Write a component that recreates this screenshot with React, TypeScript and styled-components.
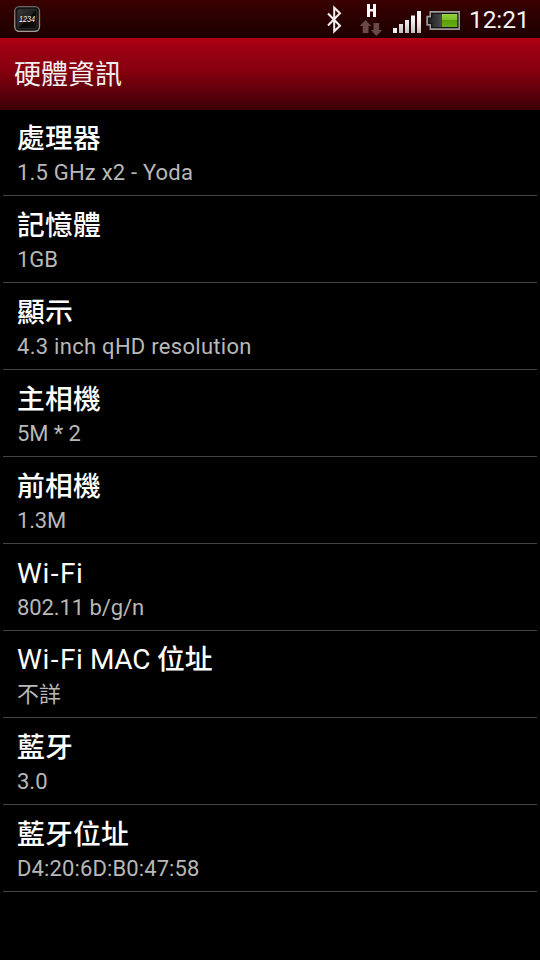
import React from "react";
import styled, { createGlobalStyle } from "styled-components";

const GlobalStyle = createGlobalStyle`
  * { box-sizing: border-box; }
  body { margin: 0; background: #000; }
`;

const Screen = styled.div`
  width: 540px;
  height: 960px;
  overflow: hidden;
  display: flex;
  flex-direction: column;
  background: #000;
  color: #fff;
  font-family: Roboto, "Noto Sans CJK TC", sans-serif;
`;

const StatusBar = styled.div`
  flex: none;
  height: 38px;
  display: flex;
  align-items: flex-start;
  justify-content: space-between;
  padding: 0 10px 0 14px;
  background: linear-gradient(#390000, #1c0000);
`;

const StatusIcons = styled.div`
  display: flex;
  align-items: flex-start;
`;

const Clock = styled.time`
  width: 61px;
  margin-left: 8px;
  font-size: 24.5px;
  line-height: 40px;
  letter-spacing: -0.1px;
  white-space: nowrap;
  color: #f4f4f4;
`;

const Header = styled.header`
  flex: none;
  height: 72px;
  padding-left: 14px;
  background: linear-gradient(#b40014 0%, #9c0012 14%, #86000f 45%, #66000b 68%, #3c0006 100%);
`;

const Title = styled.h1`
  margin: 0;
  font-size: 27px;
  font-weight: 400;
  line-height: 74px;
  color: #f3f0f0;
`;

const List = styled.ul`
  flex: none;
  margin: -1px 3px 0;
  padding: 0;
  list-style: none;
`;

const Row = styled.li`
  height: 87px;
  padding: 9px 14px 0;
  border-bottom: 1px solid #444;
`;

const Label = styled.div<{ $mixed: boolean }>`
  height: 37px;
  font-size: 28px;
  line-height: ${(p) => (p.$mixed ? 40 : 42)}px;
  white-space: pre;
`;

const LabelPart = styled.span<{ $spacing?: number; $cjk?: boolean }>`
  letter-spacing: ${(p) => p.$spacing ?? 0}px;
  font-weight: ${(p) => (p.$cjk ? 500 : 400)};
  font-size: ${(p) => (p.$cjk ? 27.8 : 28)}px;
`;

const Value = styled.div<{ $spacing?: number }>`
  height: 32px;
  font-size: 22px;
  line-height: 35px;
  letter-spacing: ${(p) => p.$spacing ?? 0}px;
  white-space: nowrap;
  color: #b8b8b8;
`;

const CounterIcon = () => (
  <svg width="28" height="38" viewBox="14 0 28 38">
    <defs>
      <linearGradient id="face" x1="0" y1="0" x2="1" y2="1">
        <stop offset="0" stopColor="#3a3a3a" />
        <stop offset="0.5" stopColor="#202020" />
        <stop offset="0.51" stopColor="#080808" />
        <stop offset="1" stopColor="#111" />
      </linearGradient>
      <linearGradient id="rim" x1="0" y1="0" x2="0" y2="1">
        <stop offset="0" stopColor="#6e6662" />
        <stop offset="1" stopColor="#a39c99" />
      </linearGradient>
    </defs>
    <rect x="14.7" y="6.7" width="24.8" height="24.6" rx="4.5" fill="#161616" stroke="url(#rim)" strokeWidth="1.3" />
    <rect x="17.5" y="9.5" width="19" height="19" rx="2" fill="url(#face)" stroke="#303030" strokeWidth="0.7" />
    <Digits x="19" y="21.8" textLength="16" lengthAdjust="spacingAndGlyphs">1234</Digits>
  </svg>
);

const Digits = styled.text`
  font-family: "Liberation Sans", sans-serif;
  font-size: 8.5px;
  font-style: italic;
  fill: #f0f4f4;
`;

const BluetoothIcon = () => (
  <svg width="34" height="38" viewBox="326 0 34 38" fill="none" stroke="#f5f0f0" strokeWidth="2" strokeLinejoin="miter">
    <path d="M328 13.5 L340 25.8 L334.2 31.3 V7.7 L340 13.2 L328 25.5" />
  </svg>
);

const DataIcon = () => (
  <svg width="30" height="38" viewBox="360 0 30 38">
    <path fill="#fff" d="M367 4H370V9H373V4H376V17H373V11.5H370V17H367Z" />
    <g fill="#6a4848">
      <path d="M365.5 20L371.3 26H368.5V33H362.7V26H359.8Z" />
      <path d="M373.5 23H379.2V30H382.2L376.4 36L370.8 30H373.5Z" />
    </g>
  </svg>
);

const SIGNAL_BARS = [28, 24, 20, 15.5, 11];

const SignalIcon = () => (
  <svg width="34" height="38" viewBox="390 0 34 38">
    <defs>
      <linearGradient id="bar" x1="0" y1="10" x2="0" y2="33" gradientUnits="userSpaceOnUse">
        <stop offset="0" stopColor="#fff" />
        <stop offset="0.5" stopColor="#eee" />
        <stop offset="1" stopColor="#c4bcbc" />
      </linearGradient>
    </defs>
    {SIGNAL_BARS.map((y, i) => (
      <rect key={y} x={393 + i * 6} y={y} width="4" height={33 - y} fill={i === 0 ? "#f2f2f2" : "url(#bar)"} />
    ))}
  </svg>
);

const BatteryIcon = () => (
  <svg width="37" height="38" viewBox="424 0 37 38">
    <defs>
      <linearGradient id="empty" x1="0" y1="0" x2="1" y2="0">
        <stop offset="0" stopColor="#222" />
        <stop offset="1" stopColor="#4a4a4a" />
      </linearGradient>
      <linearGradient id="charge" x1="0" y1="0" x2="0" y2="1">
        <stop offset="0" stopColor="#96d13c" />
        <stop offset="0.48" stopColor="#7cbd25" />
        <stop offset="0.5" stopColor="#56a00c" />
        <stop offset="1" stopColor="#68ad12" />
      </linearGradient>
    </defs>
    <path fill="#9b9b9b" d="M429.5 11H460V30H429.5V25.7H426.3V15.8H429.5Z" />
    <path fill="#151515" d="M431 12.7H458.5V28.3H431V24H428V17.5H431Z" />
    <path fill="url(#empty)" d="M432.3 14H442V27H432.3V22.8H429.3V18.8H432.3Z" />
    <rect x="442" y="14" width="15.3" height="13" fill="url(#charge)" />
  </svg>
);

type Part = { text: string; spacing?: number; cjk?: boolean };
type Item = { label: Part[]; value: string; valueSpacing?: number };

const cjk = (text: string): Part => ({ text, cjk: true, spacing: 0.2 });
const WIFI: Part[] = [
  { text: "W", spacing: 0.6 },
  { text: "i", spacing: 1.5 },
  { text: "-", spacing: 1.6 },
  { text: "Fi", spacing: 0.4 },
];

const ITEMS: Item[] = [
  { label: [cjk("處理器")], value: "1.5 GHz x2 - Yoda", valueSpacing: 0.2 },
  { label: [cjk("記憶體")], value: "1GB" },
  { label: [cjk("顯示")], value: "4.3 inch qHD resolution", valueSpacing: 0.28 },
  { label: [cjk("主相機")], value: "5M * 2", valueSpacing: -0.1 },
  { label: [cjk("前相機")], value: "1.3M", valueSpacing: -0.2 },
  { label: WIFI, value: "802.11 b/g/n", valueSpacing: -0.08 },
  { label: [...WIFI, { text: " MAC ", spacing: -0.25 }, cjk("位址")], value: "不詳" },
  { label: [cjk("藍牙")], value: "3.0" },
  { label: [cjk("藍牙位址")], value: "D4:20:6D:B0:47:58", valueSpacing: 0.12 },
];

export default function App() {
  return (
    <Screen lang="zh-Hant">
      <GlobalStyle />
      <StatusBar>
        <CounterIcon />
        <StatusIcons>
          <BluetoothIcon />
          <DataIcon />
          <SignalIcon />
          <BatteryIcon />
          <Clock>12:21</Clock>
        </StatusIcons>
      </StatusBar>
      <Header>
        <Title>硬體資訊</Title>
      </Header>
      <List>
        {ITEMS.map((item) => (
          <Row key={item.value}>
            <Label $mixed={item.label.length > WIFI.length}>
              {item.label.map((part) => (
                <LabelPart key={part.text} $spacing={part.spacing} $cjk={part.cjk}>
                  {part.text}
                </LabelPart>
              ))}
            </Label>
            <Value $spacing={item.valueSpacing}>{item.value}</Value>
          </Row>
        ))}
      </List>
    </Screen>
  );
}
